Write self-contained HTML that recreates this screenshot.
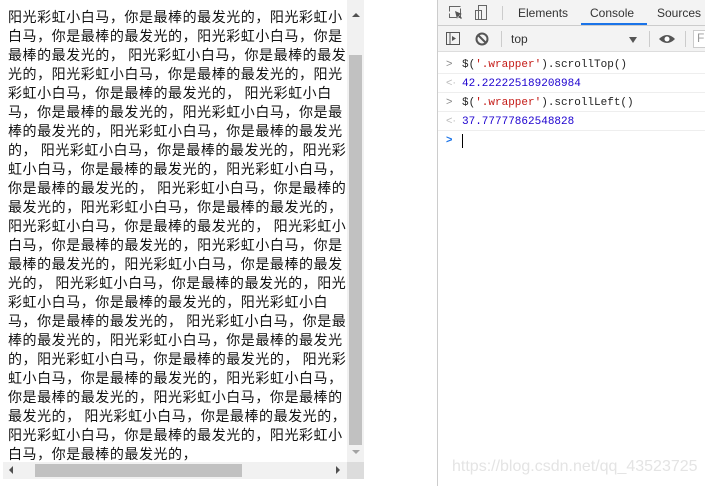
<!DOCTYPE html>
<html><head><meta charset="utf-8"><style>
*{margin:0;padding:0;box-sizing:border-box}
body{width:705px;height:486px;background:#fff;position:relative;overflow:hidden;font-family:"Liberation Sans","Noto Sans CJK SC",sans-serif}
#left{position:absolute;left:0;top:0;width:437px;height:486px;background:#fff}
#txt{position:absolute;left:8px;top:8px;font-size:14px;line-height:19px;letter-spacing:0.55px;color:#111;font-family:"Noto Sans CJK SC","Liberation Sans",sans-serif;white-space:pre}
.vs{position:absolute;left:347px;top:0;width:17px;height:462px;background:#f1f1f1}
.vt{position:absolute;left:349px;top:55px;width:13px;height:390px;background:#c1c1c1}
.hs{position:absolute;left:3px;top:462px;width:344px;height:17px;background:#f1f1f1}
.ht{position:absolute;left:35px;top:464px;width:207px;height:13px;background:#c1c1c1}
.cor{position:absolute;left:347px;top:462px;width:17px;height:17px;background:#dcdcdc}
.ar{position:absolute;width:0;height:0}
#div{position:absolute;left:437px;top:0;width:1px;height:486px;background:#ccc}
#dt{position:absolute;left:438px;top:0;width:267px;height:486px;background:#fff;font-size:12px}
.bar1{position:absolute;left:0;top:0;width:267px;height:26px;background:#f3f3f3;border-bottom:1px solid #ccc}
.bar2{position:absolute;left:0;top:26px;width:267px;height:26px;background:#f3f3f3;border-bottom:1px solid #ddd}
.tab{position:absolute;top:6px;color:#333;font-size:12px}
.mono{font-family:"Liberation Mono",monospace;font-size:11px;position:absolute;left:24px}
.row{position:absolute;left:0;width:267px;height:19px;border-bottom:1px solid #eee}
.gt{position:absolute;left:8px;color:#888;font-size:11px}
</style></head><body>
<div id="left">
<div id="txt">阳光彩虹小白马，你是最棒的最发光的，阳光彩虹小
白马，你是最棒的最发光的，阳光彩虹小白马，你是
最棒的最发光的， 阳光彩虹小白马，你是最棒的最发
光的，阳光彩虹小白马，你是最棒的最发光的，阳光
彩虹小白马，你是最棒的最发光的， 阳光彩虹小白
马，你是最棒的最发光的，阳光彩虹小白马，你是最
棒的最发光的，阳光彩虹小白马，你是最棒的最发光
的， 阳光彩虹小白马，你是最棒的最发光的，阳光彩
虹小白马，你是最棒的最发光的，阳光彩虹小白马，
你是最棒的最发光的， 阳光彩虹小白马，你是最棒的
最发光的，阳光彩虹小白马，你是最棒的最发光的，
阳光彩虹小白马，你是最棒的最发光的， 阳光彩虹小
白马，你是最棒的最发光的，阳光彩虹小白马，你是
最棒的最发光的，阳光彩虹小白马，你是最棒的最发
光的， 阳光彩虹小白马，你是最棒的最发光的，阳光
彩虹小白马，你是最棒的最发光的，阳光彩虹小白
马，你是最棒的最发光的， 阳光彩虹小白马，你是最
棒的最发光的，阳光彩虹小白马，你是最棒的最发光
的，阳光彩虹小白马，你是最棒的最发光的， 阳光彩
虹小白马，你是最棒的最发光的，阳光彩虹小白马，
你是最棒的最发光的，阳光彩虹小白马，你是最棒的
最发光的， 阳光彩虹小白马，你是最棒的最发光的，
阳光彩虹小白马，你是最棒的最发光的，阳光彩虹小
白马，你是最棒的最发光的，</div>
<div class="vs"></div><div class="vt"></div>
<div class="hs"></div><div class="ht"></div><div class="cor"></div>
<div class="ar" style="left:352px;top:13px;border-left:4px solid transparent;border-right:4px solid transparent;border-bottom:4px solid #505050"></div>
<div class="ar" style="left:352px;top:450px;border-left:4px solid transparent;border-right:4px solid transparent;border-top:4px solid #a3a3a3"></div>
<div class="ar" style="left:9px;top:466px;border-top:4px solid transparent;border-bottom:4px solid transparent;border-right:4px solid #505050"></div>
<div class="ar" style="left:336px;top:466px;border-top:4px solid transparent;border-bottom:4px solid transparent;border-left:4px solid #505050"></div>
</div>
<div id="div"></div>
<div id="dt">
<div class="bar1">
<svg style="position:absolute;left:10px;top:5px" width="16" height="16"><rect x="1.5" y="1.5" width="11" height="11" fill="none" stroke="#666" stroke-dasharray="11 2"/><path d="M7 6l7 3-3 1 3 3-1 1-3-3-1 3z" fill="#555"/></svg>
<svg style="position:absolute;left:36px;top:4px" width="14" height="17"><rect x="1.5" y="6.5" width="6" height="9" fill="none" stroke="#666"/><rect x="4.5" y="1.5" width="8" height="14" fill="none" stroke="#666"/></svg>
<div style="position:absolute;left:64px;top:6px;width:1px;height:14px;background:#ccc"></div>
<span class="tab" style="left:80px">Elements</span>
<span class="tab" style="left:152px">Console</span>
<div style="position:absolute;left:143px;top:23px;width:66px;height:2px;background:#1a73e8"></div>
<span class="tab" style="left:219px">Sources</span>
</div>
<div class="bar2">
<svg style="position:absolute;left:8px;top:6px" width="15" height="14"><rect x=".5" y=".5" width="13" height="12" fill="none" stroke="#555"/><line x1="4" y1="1" x2="4" y2="13" stroke="#555"/><path d="M6 4l4 2.5-4 2.5z" fill="#555"/></svg>
<svg style="position:absolute;left:37px;top:6px" width="14" height="14"><circle cx="7" cy="7" r="5.5" fill="none" stroke="#555" stroke-width="2"/><line x1="3" y1="3" x2="11" y2="11" stroke="#555" stroke-width="2"/></svg>
<div style="position:absolute;left:63px;top:5px;width:1px;height:16px;background:#ccc"></div>
<span style="position:absolute;left:73px;top:6px;color:#333">top</span>
<div class="ar" style="left:191px;top:11px;border-left:4px solid transparent;border-right:4px solid transparent;border-top:6px solid #555"></div>
<div style="position:absolute;left:211px;top:5px;width:1px;height:16px;background:#ccc"></div>
<svg style="position:absolute;left:220px;top:7px" width="18" height="12"><path d="M1 6Q9-2 17 6Q9 14 1 6z" fill="#555"/><circle cx="9" cy="6" r="2.5" fill="#fff"/></svg>
<div style="position:absolute;left:247px;top:5px;width:1px;height:16px;background:#ccc"></div>
<div style="position:absolute;left:255px;top:4px;width:20px;height:18px;border:1px solid #ccc;background:#fff;color:#999;padding-left:3px">Fi</div>
</div>
<div class="row" style="top:55px"><span class="gt" style="top:3px">&gt;</span><span class="mono" style="top:4px;color:#222">$(<span style="color:#c41a16">'.wrapper'</span>).scrollTop()</span></div>
<div class="row" style="top:74px"><span class="gt" style="top:3px;color:#bbb">&lt;·</span><span class="mono" style="top:4px;color:#1c00cf">42.222225189208984</span></div>
<div class="row" style="top:93px"><span class="gt" style="top:3px">&gt;</span><span class="mono" style="top:4px;color:#222">$(<span style="color:#c41a16">'.wrapper'</span>).scrollLeft()</span></div>
<div class="row" style="top:112px"><span class="gt" style="top:3px;color:#bbb">&lt;·</span><span class="mono" style="top:4px;color:#1c00cf">37.77777862548828</span></div>
<span class="gt" style="top:134px;color:#1a73e8;font-weight:bold">&gt;</span>
<div style="position:absolute;left:24px;top:134px;width:1px;height:14px;background:#000"></div>
<span style="position:absolute;left:14px;top:458px;font-size:16px;color:#e4e4e4">https://blog.csdn.net/qq_43523725</span>
</div>
</body></html>
